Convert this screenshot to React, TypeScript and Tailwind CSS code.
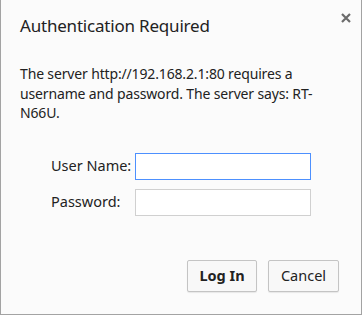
import { FC } from "react";

const font = { fontFamily: '"Noto Sans", "Open Sans", sans-serif' };

const Field: FC<{ label: string; focused?: boolean }> = ({ label, focused }) => (
  <div className="flex items-center">
    <label className="w-[84px] text-[14.5px] text-[#222]">{label}</label>
    <input
      className={`h-[27px] w-[176px] bg-white px-1 outline-none ${
        focused ? "border border-[#4d90fe]" : "border border-[#d0d0d0]"
      }`}
    />
  </div>
);

const App: FC = () => {
  return (
    <div
      style={font}
      className="relative flex h-[315px] w-[362px] flex-col border-x border-b border-[#a3a3a3] bg-[#fbfbfb] pl-[19px] text-[#222]"
    >
      {/* close */}
      <button className="absolute right-[10px] top-[13px] text-[#6b6b6b]">
        <svg width="10" height="10" viewBox="0 0 10 10">
          <path d="M1 1L9 9M9 1L1 9" stroke="currentColor" strokeWidth="2.2" />
        </svg>
      </button>

      <h1 className="mt-[13px] text-[17px] leading-[26px] tracking-[-0.2px]">
        Authentication Required
      </h1>

      <p className="mt-[25px] text-[14px] leading-[19.5px] tracking-[-0.15px]">
        The server http://192.168.2.1:80 requires a
        <br />
        username and password. The server says: RT-
        <br />
        N66U.
      </p>

      <div className="ml-[31px] mt-[30px] flex flex-col gap-[9px]">
        <Field label="User Name:" focused />
        <Field label="Password:" />
      </div>

      <div className="mr-[22px] mt-[44px] flex justify-end gap-[11px]">
        <button className="h-[32px] w-[70px] rounded-[2px] border border-[#c4c4c4] bg-[#f8f8f8] text-[14.5px] font-bold shadow-[0_1px_1px_rgba(0,0,0,0.08)]">
          Log In
        </button>
        <button className="h-[32px] w-[71px] rounded-[2px] border border-[#c4c4c4] bg-[#f8f8f8] text-[14.5px] shadow-[0_1px_1px_rgba(0,0,0,0.08)]">
          Cancel
        </button>
      </div>
    </div>
  );
};

export default App;
